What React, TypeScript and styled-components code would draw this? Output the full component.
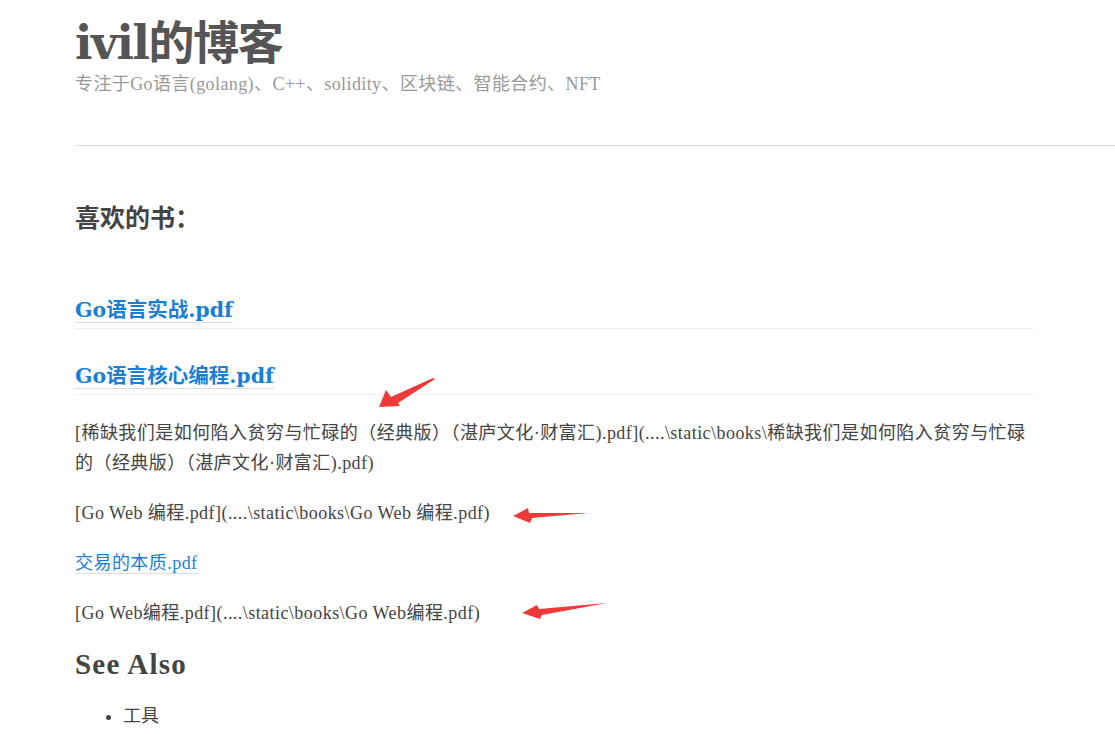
import React from 'react'
import styled, { createGlobalStyle } from 'styled-components'

const GlobalStyle = createGlobalStyle`
  html, body {
    margin: 0;
    padding: 0;
    background: #fff;
  }
  body {
    font-family: 'Liberation Serif', 'Noto Sans CJK SC', serif;
    color: #444;
  }
`

const Page = styled.div`
  position: relative;
  padding-left: 75px;
  overflow: hidden;
  height: 734px;
`

const Header = styled.header`
  padding-top: 15px;
  padding-bottom: 48px;
  border-bottom: 1px solid #ddd;
`

const SiteTitle = styled.h1`
  margin: 0;
  font-family: 'DejaVu Serif', 'Noto Sans CJK SC', serif;
  font-size: 46px;
  line-height: 56px;
  font-weight: bold;
  color: #555;
  letter-spacing: -1.4px;
`

const SiteDesc = styled.div`
  font-size: 18px;
  line-height: 26px;
  color: #999;
  letter-spacing: 0.4px;
`

const Content = styled.main`
  width: 959px;
  padding-top: 52px;
`

const SectionTitle = styled.h2<{ $serif?: boolean }>`
  margin: 0;
  font-family: ${({ $serif }) =>
    $serif ? "'Liberation Serif', 'Noto Sans CJK SC', serif" : "'Noto Sans CJK SC', sans-serif"};
  font-size: ${({ $serif }) => ($serif ? '29px' : '25px')};
  letter-spacing: ${({ $serif }) => ($serif ? '1.2px' : '0')};
  line-height: 36px;
  font-weight: bold;
  color: #444;
`

const BookHeading = styled.h3`
  margin: 0;
  padding-bottom: 3px;
  border-bottom: 1px solid #eee;
  font-family: 'DejaVu Serif', 'Noto Sans CJK SC', serif;
  font-size: 20.5px;
  line-height: 30px;
  font-weight: bold;
`

const Link = styled.a`
  color: #1a7fd4;
  text-decoration: none;
  border-bottom: 1px solid #ddd;
`

const Para = styled.p`
  margin: 0;
  font-size: 18px;
  line-height: 30px;
  letter-spacing: 0.45px;
  word-break: break-all;
`

const List = styled.ul`
  margin: 0;
  padding-left: 48px;
  font-size: 18px;
  line-height: 30px;
`

const Stack = styled.div<{ $gap: number }>`
  display: flex;
  flex-direction: column;
  gap: ${({ $gap }) => $gap}px;
`

const Arrow = styled.svg`
  position: absolute;
  left: 0;
  top: 0;
  pointer-events: none;
`

const arrows = [
  'M435 379 L398 403 L400 406 L379 407 L386 390 L391 397 L433 378 Z',
  'M588 513 L532 518 L530 523 L513 516 L528 508 L529 513 Z',
  'M607 603 L542 615 L540 619 L522 613 L537 605 L539 609 Z',
]

export default function App() {
  return (
    <>
      <GlobalStyle />
      <Page>
        <Header>
          <SiteTitle>ivil的博客</SiteTitle>
          <SiteDesc>专注于Go语言(golang)、C++、solidity、区块链、智能合约、NFT</SiteDesc>
        </Header>
        <Content>
          <SectionTitle>喜欢的书：</SectionTitle>
          <Stack $gap={32} style={{ marginTop: 61 }}>
            <BookHeading>
              <Link href="#">Go语言实战.pdf</Link>
            </BookHeading>
            <BookHeading>
              <Link href="#">Go语言核心编程.pdf</Link>
            </BookHeading>
          </Stack>
          <Stack $gap={20} style={{ marginTop: 23 }}>
            <Para>
              [稀缺我们是如何陷入贫穷与忙碌的（经典版）（湛庐文化·财富汇).pdf](....\static\books\稀缺我们是如何陷入贫穷与忙碌的（经典版）（湛庐文化·财富汇).pdf)
            </Para>
            <Para>[Go Web 编程.pdf](....\static\books\Go Web 编程.pdf)</Para>
            <Para>
              <Link href="#">交易的本质.pdf</Link>
            </Para>
            <Para>[Go Web编程.pdf](....\static\books\Go Web编程.pdf)</Para>
          </Stack>
          <SectionTitle $serif style={{ marginTop: 18 }}>
            See Also
          </SectionTitle>
          <List style={{ marginTop: 19 }}>
            <li>工具</li>
          </List>
        </Content>
        <Arrow width="1115" height="734" viewBox="0 0 1115 734">
          {arrows.map((d) => (
            <path key={d} d={d} fill="#f03a3a" />
          ))}
        </Arrow>
      </Page>
    </>
  )
}
